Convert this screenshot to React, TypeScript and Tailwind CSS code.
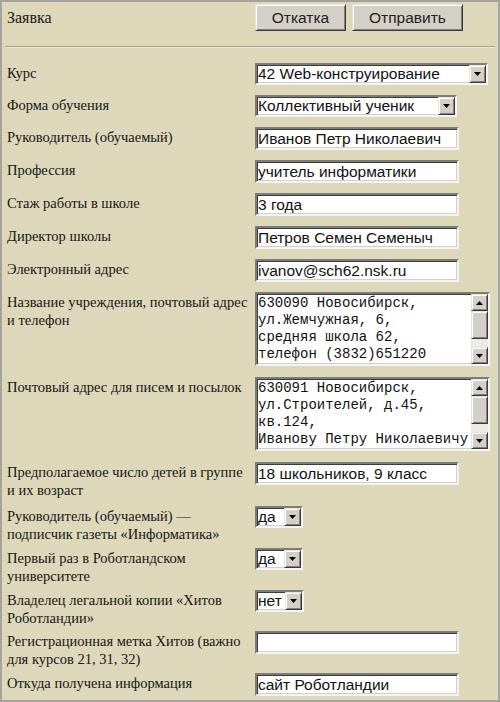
import React from "react";

const inset =
  "bg-white border-2 border-t-[#7c7c7c] border-l-[#7c7c7c] border-b-[#f4f4f4] border-r-[#f4f4f4] shadow-[inset_1px_1px_0_#3c3c3c,inset_-1px_-1px_0_#d4d0c8]";

function Arrow({ up }: { up?: boolean }) {
  return (
    <svg width="7" height="4" viewBox="0 0 7 4" className="block">
      {up ? <path d="M3.5 0 L7 4 L0 4 Z" fill="#000" /> : <path d="M0 0 L7 0 L3.5 4 Z" fill="#000" />}
    </svg>
  );
}

function BtnBox({ children, className = "" }: { children?: React.ReactNode; className?: string }) {
  return (
    <div
      className={
        "bg-[#d4d0c8] flex items-center justify-center border border-t-[#e6e3dc] border-l-[#e6e3dc] border-b-[#3a3a3a] border-r-[#3a3a3a] shadow-[inset_1px_1px_0_#ffffff,inset_-1px_-1px_0_#808080] " +
        className
      }
    >
      {children}
    </div>
  );
}

function TextBox({ value, w = "w-[204px]" }: { value: string; w?: string }) {
  return (
    <div className={inset + " " + w + " h-[23px] flex items-center pl-[1px] whitespace-nowrap overflow-hidden"}>
      <span className="font-['Liberation_Sans'] text-[15.5px] text-[#111]">{value}</span>
    </div>
  );
}

function Select({ value, w }: { value: string; w: string }) {
  return (
    <div className={inset + " " + w + " h-[22px] flex items-stretch"}>
      <div className="flex-1 flex items-center pl-[1px] whitespace-nowrap overflow-hidden">
        <span className="font-['Liberation_Sans'] text-[15.5px] text-[#111]">{value}</span>
      </div>
      <BtnBox className="w-[17px]">
        <Arrow />
      </BtnBox>
    </div>
  );
}

function TextArea({ lines, thumbH }: { lines: string[]; thumbH: number }) {
  return (
    <div className={inset + " w-[235px] h-[74px] flex"}>
      <div className="flex-1 pl-[1px] pt-[1px] overflow-hidden font-['Liberation_Mono'] text-[14px] leading-[17px] text-[#111] whitespace-pre">
        {lines.map((l, i) => (
          <div key={i}>{l}</div>
        ))}
      </div>
      <div className="w-[17px] flex flex-col bg-[#ecebe6]">
        <BtnBox className="h-[17px]">
          <Arrow up />
        </BtnBox>
        <BtnBox>
          <div style={{ height: thumbH }} />
        </BtnBox>
        <div className="flex-1" />
        <BtnBox className="h-[17px]">
          <Arrow />
        </BtnBox>
      </div>
    </div>
  );
}

type Row = { label: React.ReactNode; control: React.ReactNode; h: string };

export default function App() {
  const rows: Row[] = [
    { label: "Курс", control: <Select value="42 Web-конструирование" w="w-[233px]" />, h: "h-[32px]" },
    { label: "Форма обучения", control: <Select value="Коллективный ученик" w="w-[202px]" />, h: "h-[32px]" },
    { label: "Руководитель (обучаемый)", control: <TextBox value="Иванов Петр Николаевич" />, h: "h-[33px]" },
    { label: "Профессия", control: <TextBox value="учитель информатики" />, h: "h-[33px]" },
    { label: "Стаж работы в школе", control: <TextBox value="3 года" />, h: "h-[33px]" },
    { label: "Директор школы", control: <TextBox value="Петров Семен Семеныч" />, h: "h-[33px]" },
    { label: "Электронный адрес", control: <TextBox value="ivanov@sch62.nsk.ru" />, h: "h-[33px]" },
    {
      label: (
        <>
          Название учреждения, почтовый адрес
          <br />и телефон
        </>
      ),
      control: (
        <TextArea
          lines={["630090 Новосибирск,", "ул.Жемчужная, 6,", "средняя школа 62,", "телефон (3832)651220"]}
          thumbH={26}
        />
      ),
      h: "h-[85px]",
    },
    {
      label: "Почтовый адрес для писем и посылок",
      control: (
        <TextArea
          lines={["630091 Новосибирск,", "ул.Строителей, д.45,", "кв.124,", "Иванову Петру Николаевичу"]}
          thumbH={26}
        />
      ),
      h: "h-[85px]",
    },
    {
      label: (
        <>
          Предполагаемое число детей в группе
          <br />и их возраст
        </>
      ),
      control: <TextBox value="18 школьников, 9 класс" />,
      h: "h-[44px]",
    },
    {
      label: (
        <>
          Руководитель (обучаемый) —
          <br />
          подписчик газеты «Информатика»
        </>
      ),
      control: <Select value="да" w="w-[48px]" />,
      h: "h-[42px]",
    },
    {
      label: (
        <>
          Первый раз в Роботландском
          <br />
          университете
        </>
      ),
      control: <Select value="да" w="w-[48px]" />,
      h: "h-[42px]",
    },
    {
      label: (
        <>
          Владелец легальной копии «Хитов
          <br />
          Роботландии»
        </>
      ),
      control: <Select value="нет" w="w-[49px]" />,
      h: "h-[41px]",
    },
    {
      label: (
        <>
          Регистрационная метка Хитов (важно
          <br />
          для курсов 21, 31, 32)
        </>
      ),
      control: <TextBox value="" />,
      h: "h-[42px]",
    },
    { label: "Откуда получена информация", control: <TextBox value="сайт Роботландии" />, h: "h-[30px]" },
  ];

  return (
    <div className="w-[500px] h-[702px] box-border bg-[#ddd8b9] border-2 border-[#a4a39c] overflow-hidden font-['Liberation_Serif'] text-[#161616]">
      <div className="flex h-[44px] pt-[2px]">
        <div className="w-[253px] pl-[5px] pt-[4px] text-[16px] leading-[20px]">Заявка</div>
        <div className="flex gap-[6px] font-['Liberation_Sans'] text-[15.5px] text-[#222]">
          <BtnBox className="w-[91px] h-[27px]">Откатка</BtnBox>
          <BtnBox className="w-[111px] h-[27px]">Отправить</BtnBox>
        </div>
      </div>
      <div className="mx-[3px] h-[2px] bg-[#a5a190] border-b border-[#ece7cf]" />
      <div className="flex flex-col pt-[15px]">
        {rows.map((r, i) => (
          <div key={i} className={"flex " + r.h}>
            <div className="w-[253px] shrink-0 pl-[5px] pt-[1px] text-[14.5px] leading-[18px] whitespace-nowrap">{r.label}</div>
            <div>{r.control}</div>
          </div>
        ))}
      </div>
    </div>
  );
}
